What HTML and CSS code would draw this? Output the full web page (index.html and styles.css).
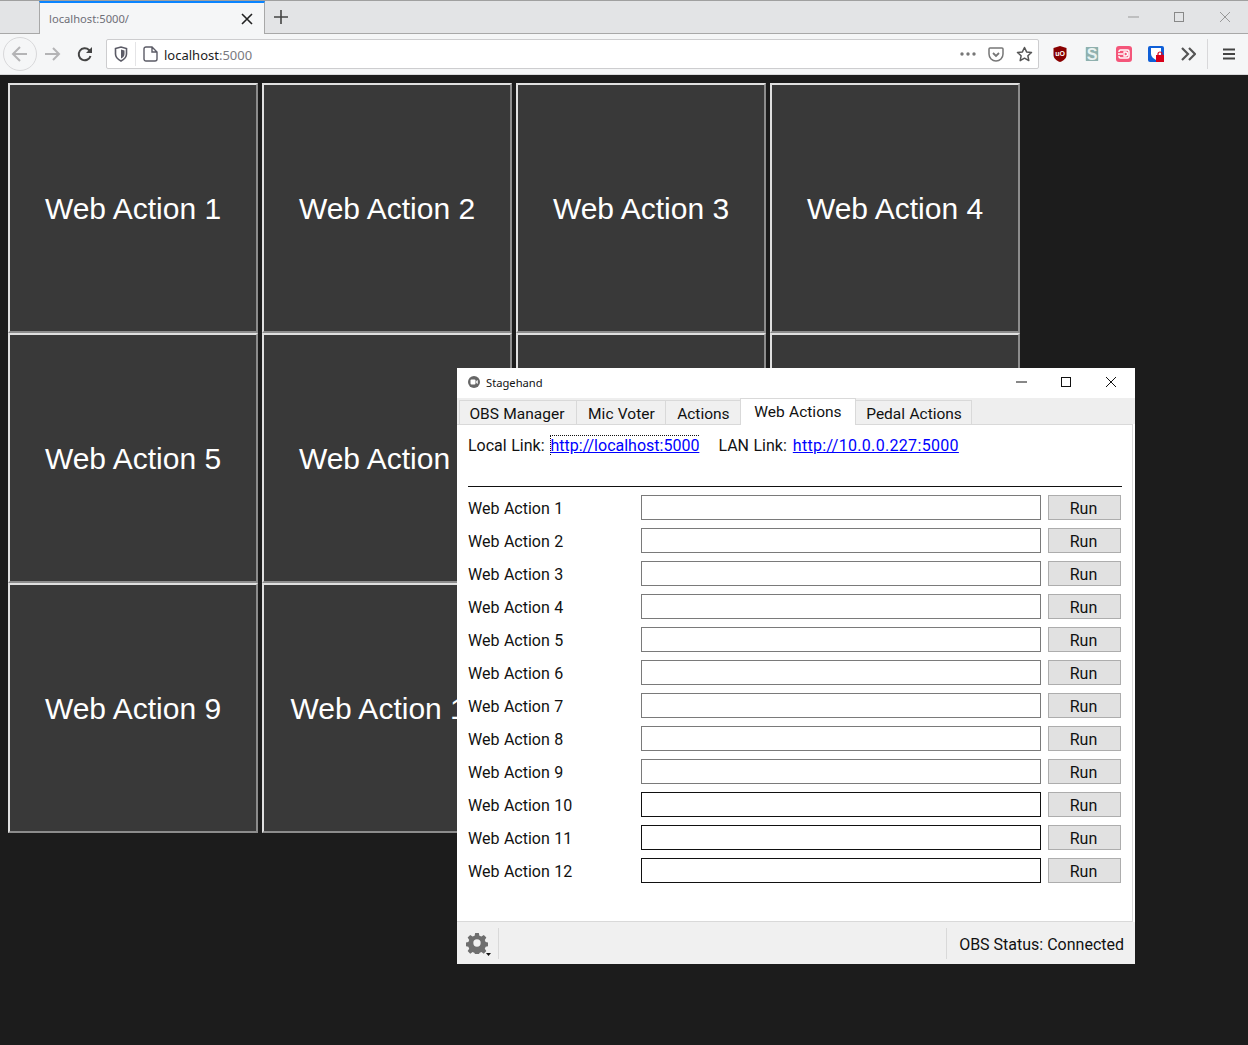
FILE: index.html
```html
<!DOCTYPE html>
<html lang="en">
<head>
    <meta charset="UTF-8">
    <title>localhost:5000</title>
    <link rel="stylesheet" href="styles.css">
</head>
<body>
    <!-- browser chrome -->
    <div class="tab-bar">
        <div class="tab-spacer"></div>
        <div class="tab">
            <span class="tab-title">localhost:5000/</span>
            <svg class="tab-close" width="12" height="12" viewBox="0 0 12 12"><path d="M1 1l10 10M11 1L1 11" stroke="#222" stroke-width="1.6" fill="none"/></svg>
        </div>
        <svg class="new-tab" width="14" height="14" viewBox="0 0 14 14"><path d="M7 0v14M0 7h14" stroke="#444" stroke-width="1.6" fill="none"/></svg>
        <div class="win-controls">
            <svg width="46" height="12" viewBox="0 0 46 12"><path d="M18 6h11" stroke="#999" fill="none"/></svg>
            <svg width="46" height="12" viewBox="0 0 46 12"><rect x="18.500" y="1.500" width="9" height="9" stroke="#888" fill="none"/></svg>
            <svg width="46" height="12" viewBox="0 0 46 12"><path d="M18 1l10 10M28 1L18 11" stroke="#999" fill="none"/></svg>
        </div>
    </div>
    <div class="nav-bar">
        <div class="back-btn">
            <svg width="18" height="18" viewBox="0 0 18 18"><path d="M16 9H2M9 2L2 9l7 7" stroke="#b4b4b6" stroke-width="2" fill="none"/></svg>
        </div>
        <svg class="nav-icon" width="18" height="18" viewBox="0 0 18 18"><path d="M1 9h14M9 3l6 6-6 6" stroke="#b4b4b6" stroke-width="2" fill="none"/></svg>
        <svg class="nav-icon" width="18" height="18" viewBox="0 0 18 18"><path d="M14.500 11A6 6 0 1 1 13 5l2 2" stroke="#444" stroke-width="2" fill="none"/><path d="M16 2v6h-6z" fill="#444"/></svg>
        <div class="url-box">
            <svg class="shield" width="14" height="16" viewBox="0 0 14 16"><path d="M1.500 2.500L7 1l5.500 1.500V8c0 3-2.500 5.500-5.500 7C4 13.500 1.500 11 1.500 8z" stroke="#5b5b66" stroke-width="1.600" fill="none"/><path d="M7 3.500l3.500 1V8c0 2-1.500 3.500-3.500 4.500z" fill="#5b5b66"/></svg>
            <div class="url-sep"></div>
            <svg class="page-icon" width="15" height="16" viewBox="0 0 15 16"><path d="M3 1h6l5 5v7a2 2 0 0 1-2 2H3a2 2 0 0 1-2-2V3a2 2 0 0 1 2-2zM9 1v5h5" stroke="#5b5b66" stroke-width="1.400" fill="none"/></svg>
            <span class="url-text">localhost<span class="url-port">:5000</span></span>
            <div class="url-actions">
                <svg width="16" height="4" viewBox="0 0 16 4"><circle cx="2" cy="2" r="1.700" fill="#777"/><circle cx="8" cy="2" r="1.700" fill="#777"/><circle cx="14" cy="2" r="1.700" fill="#777"/></svg>
                <svg width="16" height="15" viewBox="0 0 16 15"><path d="M2 1h12a1 1 0 0 1 1 1v5a7 7 0 0 1-14 0V2a1 1 0 0 1 1-1z" stroke="#777" stroke-width="1.500" fill="none"/><path d="M5 6l3 3 3-3" stroke="#777" stroke-width="1.800" fill="none"/></svg>
                <svg width="17" height="16" viewBox="0 0 17 16"><path d="M8.500 1.500l2.100 4.400 4.900.6-3.600 3.300.9 4.800-4.300-2.400-4.300 2.400.9-4.800L1.500 6.500l4.900-.6z" stroke="#555" stroke-width="1.500" fill="none" stroke-linejoin="round"/></svg>
            </div>
        </div>
        <div class="ext-icons">
            <svg width="16" height="16" viewBox="0 0 16 16"><path d="M8 0l6.500 2v7c0 3-2.500 5.500-6.500 7-4-1.500-6.500-4-6.500-7V2z" fill="#800"/><text x="8" y="9.500" class="ext-label">uO</text></svg>
            <svg width="16" height="16" viewBox="0 0 16 16"><rect x="1" y="1" width="14" height="14" rx="1" fill="#d6ecea"/><rect x="2" y="1" width="12" height="14" fill="#8fb0ae"/><text x="8" y="13.500" class="ext-s">S</text></svg>
            <svg width="16" height="16" viewBox="0 0 16 16"><rect width="16" height="16" rx="3" fill="#f4567a"/><path d="M3 6V5.500A1.500 1.500 0 0 1 4.500 4h7A1.500 1.500 0 0 1 13 5.500v5a1.500 1.500 0 0 1-1.500 1.500h-7A1.500 1.500 0 0 1 3 10.500V10" fill="none" stroke="#fff" stroke-width="1.500"/><path d="M2 8h5M8 6h1.500a2 2 0 0 1 0 4H8z" fill="none" stroke="#fff" stroke-width="1.300"/></svg>
            <svg width="16" height="16" viewBox="0 0 16 16"><rect width="16" height="16" rx="2" fill="#0f5fd7"/><path d="M3 2h10v6c0 2.500-2.500 4.500-5 6-2.500-1.500-5-3.500-5-6z" fill="#fff"/><rect x="8" y="9" width="8" height="7" fill="#d8001a"/><path d="M10 9.500V8a2 2 0 0 1 4 0v1.500" stroke="#d8001a" stroke-width="1.200" fill="none"/></svg>
            <svg width="16" height="14" viewBox="0 0 16 14"><path d="M2 1l6 6-6 6M9 1l6 6-6 6" stroke="#555" stroke-width="2.200" fill="none"/></svg>
        </div>
        <div class="nav-sep"></div>
        <svg class="menu-icon" width="12" height="12" viewBox="0 0 12 12"><path d="M0 1.500h12M0 6h12M0 10.500h12" stroke="#444" stroke-width="1.800" fill="none"/></svg>
    </div>

    <!-- page -->
    <div class="page">
        <button class="action">Web Action 1</button>
        <button class="action">Web Action 2</button>
        <button class="action">Web Action 3</button>
        <button class="action">Web Action 4</button>
        <button class="action">Web Action 5</button>
        <button class="action">Web Action 6</button>
        <button class="action">Web Action 7</button>
        <button class="action">Web Action 8</button>
        <button class="action">Web Action 9</button>
        <button class="action">Web Action 10</button>
        <button class="action">Web Action 11</button>
        <button class="action">Web Action 12</button>
    </div>

    <!-- desktop window -->
    <div class="window">
        <div class="title-bar">
            <svg class="app-icon" width="12" height="12" viewBox="0 0 12 12"><circle cx="6" cy="6" r="6" fill="#666"/><rect x="2.500" y="3.500" width="5" height="5" rx="1" fill="#fff"/><path d="M8 5l2-1v4L8 7z" fill="#ddd"/></svg>
            <span class="title-text">Stagehand</span>
            <div class="title-controls">
                <svg width="45" height="12" viewBox="0 0 45 12"><path d="M17 6h11" stroke="#111" fill="none"/></svg>
                <svg width="45" height="12" viewBox="0 0 45 12"><rect x="17.500" y="1.500" width="9" height="9" stroke="#111" fill="none"/></svg>
                <svg width="45" height="12" viewBox="0 0 45 12"><path d="M17 1l10 10M27 1L17 11" stroke="#111" fill="none"/></svg>
            </div>
        </div>
        <div class="tabs">
            <div class="win-tab">OBS Manager</div>
            <div class="win-tab">Mic Voter</div>
            <div class="win-tab">Actions</div>
            <div class="win-tab active">Web Actions</div>
            <div class="win-tab">Pedal Actions</div>
        </div>
        <div class="pane">
            <div class="links"><span>Local Link:</span><a class="link focused" href="#">http://localhost:5000</a><span class="lan">LAN Link:</span><a class="link wide" href="#">http://10.0.0.227:5000</a></div>
            <hr class="divider">
            <div class="row"><label>Web Action 1</label><input class="field" type="text"><button class="run">Run</button></div>
            <div class="row"><label>Web Action 2</label><input class="field" type="text"><button class="run">Run</button></div>
            <div class="row"><label>Web Action 3</label><input class="field" type="text"><button class="run">Run</button></div>
            <div class="row"><label>Web Action 4</label><input class="field" type="text"><button class="run">Run</button></div>
            <div class="row"><label>Web Action 5</label><input class="field" type="text"><button class="run">Run</button></div>
            <div class="row"><label>Web Action 6</label><input class="field" type="text"><button class="run">Run</button></div>
            <div class="row"><label>Web Action 7</label><input class="field" type="text"><button class="run">Run</button></div>
            <div class="row"><label>Web Action 8</label><input class="field" type="text"><button class="run">Run</button></div>
            <div class="row"><label>Web Action 9</label><input class="field" type="text"><button class="run">Run</button></div>
            <div class="row"><label>Web Action 10</label><input class="field dark" type="text"><button class="run">Run</button></div>
            <div class="row"><label>Web Action 11</label><input class="field dark" type="text"><button class="run">Run</button></div>
            <div class="row"><label>Web Action 12</label><input class="field dark" type="text"><button class="run">Run</button></div>
        </div>
        <div class="status-bar">
            <svg class="gear" width="22" height="22" viewBox="0 0 24 24"><path fill="#6e6e6e" fill-rule="evenodd" d="M10 1h4l.6 3 2.200.9 2.600-1.700 2.800 2.800-1.700 2.600.9 2.200 3 .6v4l-3 .6-.9 2.200 1.700 2.600-2.800 2.800-2.600-1.700-2.200.9-.6 3h-4l-.6-3-2.200-.9-2.600 1.700-2.800-2.800 1.700-2.600-.9-2.200-3-.6v-4l3-.6.9-2.200-1.700-2.600 2.800-2.800 2.600 1.700 2.200-.9zM12 8a4 4 0 1 0 0 8 4 4 0 0 0 0-8z"/></svg>
            <svg class="caret" width="5" height="3" viewBox="0 0 5 3"><path d="M0 0h5L2.500 3z" fill="#111"/></svg>
            <div class="status-sep"></div>
            <div class="status-text">OBS Status: Connected</div>
        </div>
    </div>
</body>
</html>
```
FILE: styles.css
```css
html, body {
    margin: 0;
    padding: 0;
}
body {
    height: 1045px;
    overflow: hidden;
    background: #1c1c1c;
    position: relative;
    font-family: "Liberation Sans", Arial, sans-serif;
}

/* browser chrome */
.tab-bar {
    display: flex;
    align-items: center;
    height: 32px;
    background: #e3e4e6;
    border-top: 1px solid #a0a0a0;
    border-bottom: 1px solid #a8a8a8;
}
.tab-spacer {
    width: 39px;
    height: 100%;
}
.tab {
    display: flex;
    align-items: center;
    width: 226px;
    height: 33px;
    box-sizing: border-box;
    background: #f5f6f7;
    border-top: 2px solid #0a84ff;
    border-left: 1px solid #a8a8a8;
    border-right: 1px solid #a8a8a8;
    padding: 0 11px 0 9px;
    margin-bottom: -1px;
}
.tab-title {
    flex: 1;
    font-size: 11.2px;
    color: #6f6f78;
    font-family: "Noto Sans", sans-serif;
}
.new-tab {
    margin-left: 9px;
}
.win-controls {
    display: flex;
    margin-left: auto;
}
.nav-bar {
    display: flex;
    align-items: center;
    height: 40px;
    background: #f5f6f7;
    border-bottom: 1px solid #d8d8da;
}
.back-btn {
    display: flex;
    align-items: center;
    justify-content: center;
    width: 34px;
    height: 34px;
    margin-left: 3px;
    border: 1px solid #d8d8da;
    border-radius: 50%;
    box-sizing: border-box;
}
.nav-icon {
    margin-left: 7px;
}
.nav-icon + .nav-icon {
    margin-left: 14px;
}
.url-box {
    display: flex;
    align-items: center;
    width: 933px;
    height: 30px;
    margin-left: 12px;
    padding-left: 7px;
    box-sizing: border-box;
    background: #fff;
    border: 1px solid #cdcdcf;
    border-radius: 2px;
}
.url-sep {
    width: 1px;
    height: 24px;
    margin: 0 7px;
    background: #e4e4e6;
}
.url-text {
    margin-left: 6px;
    padding-top: 1px;
    font-size: 13px;
    color: #1c1c1c;
    font-family: "Noto Sans", sans-serif;
}
.url-port {
    color: #7a7a80;
}
.url-actions {
    display: flex;
    align-items: center;
    gap: 12px;
    margin-left: auto;
    margin-right: 5px;
}
.ext-icons {
    display: flex;
    align-items: center;
    gap: 16px;
    margin-left: 13px;
}
.ext-label {
    font-size: 7px;
    font-weight: bold;
    fill: #fff;
    text-anchor: middle;
}
.ext-s {
    font-size: 16px;
    font-weight: bold;
    fill: #e8f2f1;
    text-anchor: middle;
}
.nav-sep {
    width: 1px;
    height: 30px;
    margin-left: 11px;
    background: #d8d8da;
}
.menu-icon {
    margin-left: 15px;
}

/* page */
.page {
    width: 1040px;
    padding: 8px 0 0 8px;
    font-size: 0;
}
.action {
    width: 250px;
    height: 250px;
    margin: 0 4px 0 0;
    padding: 2px 0 0 0;
    vertical-align: top;
    background: #393939;
    color: #fff;
    border: 2px outset #e0e0e0;
    font-family: "Liberation Sans", Arial, sans-serif;
    font-size: 30px;
}

/* desktop window */
.window {
    position: absolute;
    left: 457px;
    top: 368px;
    width: 678px;
    height: 596px;
    display: flex;
    flex-direction: column;
    background: #fff;
    color: #111;
    font-family: Roboto, "Noto Sans", sans-serif;
    font-size: 16px;
    word-spacing: 0.5px;
}
.title-bar {
    display: flex;
    align-items: center;
    height: 28px;
    padding: 0 0 2px 11px;
    flex: none;
}
.title-text {
    margin-left: 6px;
    font-family: "Noto Sans", sans-serif;
    font-size: 11.2px;
}
.title-controls {
    display: flex;
    margin-left: auto;
    margin-right: 1px;
}
.tabs {
    display: flex;
    align-items: flex-end;
    height: 26px;
    padding-left: 2px;
    background: #eee;
    font-size: 15.5px;
    flex: none;
}
.win-tab {
    height: 24px;
    line-height: 26px;
    padding: 0 10.7px;
    margin-right: -1px;
    border: 1px solid #d9d9d9;
    border-bottom: none;
    background: #f0f0f0;
    box-sizing: border-box;
}
.win-tab:first-child {
    padding: 0 12px 0 9.400px;
}
.win-tab:last-child {
    padding-right: 9px;
}
.win-tab.active {
    height: 27px;
    line-height: 26px;
    margin-bottom: -1px;
    padding: 0 13px;
    background: #fff;
    position: relative;
}
.pane {
    flex: 1;
    margin-right: 2px;
    padding: 10px 10px 0 11px;
    border-top: 1px solid #d9d9d9;
    border-right: 1px solid #d9d9d9;
    border-bottom: 1px solid #d9d9d9;
}
.links {
    display: block;
    height: 20px;
    line-height: 20px;
    white-space: nowrap;
}
.link {
    display: inline-block;
    margin-left: 5px;
    color: #00f;
    word-spacing: 0;
}
.link.focused {
    border-top: 1px dotted #111;
    border-left: 1px dotted #111;
    line-height: 19px;
}
.link.wide {
    margin-left: 6px;
    letter-spacing: 0.32px;
}
.lan {
    margin-left: 19px;
}
.divider {
    height: 1px;
    margin: 31px 0 8px 0;
    border: none;
    background: #111;
}
.row {
    display: flex;
    align-items: center;
    height: 25px;
    margin-bottom: 8px;
}
.row label {
    width: 173px;
    padding-top: 1px;
}
.field {
    width: 400px;
    height: 25px;
    margin: 0;
    padding: 0;
    box-sizing: border-box;
    background: #fff;
    border: 1px solid #7a7a7a;
}
.field.dark {
    border-color: #111;
}
.run {
    width: 73px;
    height: 25px;
    margin: 0 0 0 7px;
    padding: 2px 2px 0 0;
    box-sizing: border-box;
    background: #e1e1e1;
    color: #111;
    border: 1px solid #adadad;
    font-family: Roboto, "Noto Sans", sans-serif;
    font-size: 16px;
}
.status-bar {
    display: flex;
    align-items: center;
    height: 42px;
    background: #f0f0f0;
    flex: none;
}
.gear {
    margin-left: 9px;
}
.caret {
    align-self: flex-end;
    margin: 0 0 8px -2px;
}
.status-sep {
    width: 1px;
    height: 31px;
    margin-left: 7px;
    background: #d9d9d9;
}
.status-text {
    margin-left: auto;
    padding-left: 12px;
    padding-right: 11px;
    height: 31px;
    line-height: 33px;
    word-spacing: 0;
    border-left: 1px solid #d9d9d9;
}
```
